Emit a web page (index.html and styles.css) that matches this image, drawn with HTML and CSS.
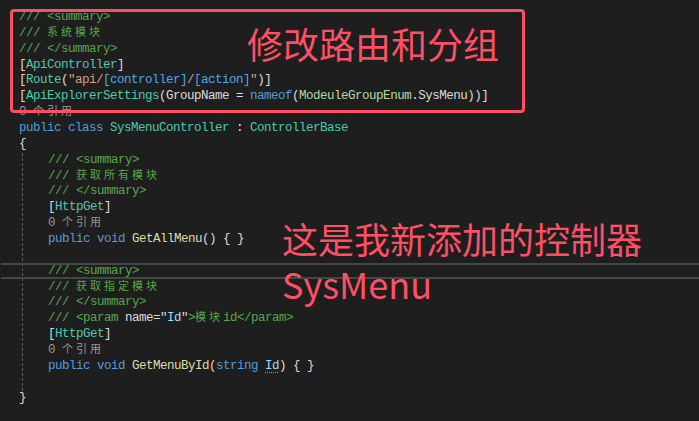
FILE: index.html
```html
<!DOCTYPE html>
<html lang="zh">
<head>
<meta charset="utf-8">
<title>SysMenuController</title>
<link rel="stylesheet" href="styles.css">
</head>
<body>
<div class="editor">
  <div class="code">
    <div class="ln"><span class="cm">/// &lt;summary&gt;</span></div>
    <div class="ln"><span class="cm">/// <span class="cjk">系统模块</span></span></div>
    <div class="ln"><span class="cm">/// &lt;/summary&gt;</span></div>
    <div class="ln"><span class="pn">[</span><span class="ty">ApiController</span><span class="pn">]</span></div>
    <div class="ln"><span class="pn">[</span><span class="ty">Route</span><span class="pn">(</span><span class="st">"api/</span><span class="rp">[controller]</span><span class="st">/</span><span class="rp">[action]</span><span class="st">"</span><span class="pn">)]</span></div>
    <div class="ln"><span class="pn">[</span><span class="ty">ApiExplorerSettings</span><span class="pn">(GroupName = </span><span class="kw">nameof</span><span class="pn">(</span><span class="en">ModeuleGroupEnum</span><span class="pn">.SysMenu))]</span></div>
    <div class="ln lens">0 <span class="cjk">个引用</span></div>
    <div class="ln"><span class="kw">public class </span><span class="ty">SysMenuController</span><span class="pn"> : </span><span class="ty">ControllerBase</span></div>
    <div class="ln"><span class="pn">{</span></div>
    <div class="block">
      <div class="ln"><span class="cm">/// &lt;summary&gt;</span></div>
      <div class="ln"><span class="cm">/// <span class="cjk">获取所有模块</span></span></div>
      <div class="ln"><span class="cm">/// &lt;/summary&gt;</span></div>
      <div class="ln"><span class="pn">[</span><span class="ty">HttpGet</span><span class="pn">]</span></div>
      <div class="ln lens">0 <span class="cjk">个引用</span></div>
      <div class="ln"><span class="kw">public void </span><span class="fn">GetAllMenu</span><span class="pn">() { }</span></div>
      <div class="ln"> </div>
      <div class="ln current"><span class="cm">/// &lt;summary&gt;</span></div>
      <div class="ln"><span class="cm">/// <span class="cjk">获取指定模块</span></span></div>
      <div class="ln"><span class="cm">/// &lt;/summary&gt;</span></div>
      <div class="ln"><span class="cm">/// &lt;param </span><span class="pn">name=</span><span class="pn">"</span><span class="pr">Id</span><span class="pn">"</span><span class="cm">&gt;<span class="cjk">模块</span>id&lt;/param&gt;</span></div>
      <div class="ln"><span class="pn">[</span><span class="ty">HttpGet</span><span class="pn">]</span></div>
      <div class="ln lens">0 <span class="cjk">个引用</span></div>
      <div class="ln"><span class="kw">public void </span><span class="fn">GetMenuById</span><span class="pn">(</span><span class="kw">string </span><span class="pr dotted">Id</span><span class="pn">) { }</span></div>
      <div class="ln"> </div>
    </div>
    <div class="ln"><span class="pn">}</span></div>
  </div>

  <div class="mark-box"></div>
  <div class="note note-top">修改路由和分组</div>
  <div class="note note-mid">这是我新添加的控制器<br>SysMenu</div>
</div>
</body>
</html>
```

FILE: styles.css
```css
html, body {
  margin: 0;
  padding: 0;
  background: #1e1e1e;
}

.editor {
  position: relative;
  width: 699px;
  height: 421px;
  overflow: hidden;
  background: #1e1e1e;
}

.code {
  padding: 10px 0 0 19px;
  font-family: "Liberation Mono", "DejaVu Sans Mono", monospace;
  font-size: 12.5px;
  letter-spacing: -0.5px;
  line-height: 15.86px;
  color: #dcdcdc;
}

.ln {
  height: 15.86px;
  white-space: pre;
}

.cjk {
  font-family: "Noto Sans CJK SC", sans-serif;
  font-size: 11px;
  letter-spacing: 3px;
  line-height: 8px;
}

.block {
  margin-left: 3px;
  padding-left: 25px;
  border-left: 1px dashed #5c5c5c;
}

.current {
  box-sizing: border-box;
  margin-left: -47px;
  padding-left: 47px;
  margin-right: -20px;
  margin-top: -1px;
  margin-bottom: 1px;
  border-top: 2px solid #464646;
  border-bottom: 2px solid #464646;
  line-height: 12px;
}

.cm { color: #57a64a; }
.pn { color: #dcdcdc; }
.ty { color: #4ec9b0; }
.kw { color: #569cd6; }
.st { color: #d69d85; }
.rp { color: #4ea6ee; }
.en { color: #b8d7a3; }
.fn { color: #dcdcaa; }
.pr { color: #9cdcfe; }
.lens { color: #999999; }

.dotted {
  text-decoration: underline dotted #8a8a8a;
  text-underline-offset: 3px;
}

.mark-box {
  position: absolute;
  left: 10px;
  top: 9px;
  width: 509px;
  height: 98px;
  border: 3px solid #fd5064;
  border-radius: 4px;
}

.note {
  position: absolute;
  font-family: "Noto Sans CJK SC", "Noto Sans", sans-serif;
  font-size: 36px;
  line-height: 1;
  color: #fd5064;
  white-space: nowrap;
}

.note-top {
  left: 247px;
  top: 25px;
}

.note-mid {
  left: 282px;
  top: 221px;
  line-height: 45px;
  margin-top: -5px;
}
```
